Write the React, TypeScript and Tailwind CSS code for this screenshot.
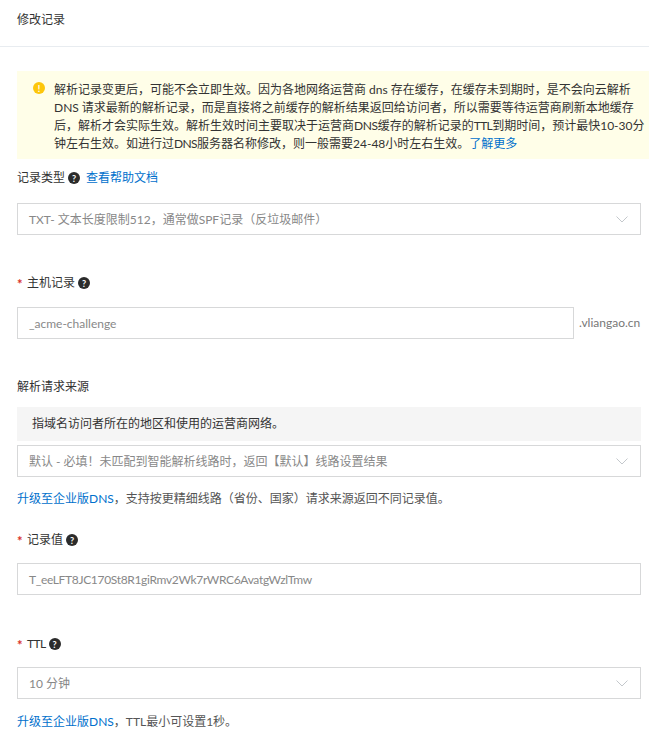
import type { ReactNode } from 'react';

const font = "font-['Lato','Noto_Sans_CJK_SC',sans-serif]";

function Help() {
  return (
    <span className="ml-[3px] inline-flex h-3 w-3 shrink-0 items-center justify-center rounded-full bg-[#2b2b2b] text-[9px] leading-none font-bold text-white">
      ?
    </span>
  );
}

function Chevron() {
  return (
    <svg width="12" height="7" viewBox="0 0 12 7" fill="none" className="shrink-0">
      <path d="M0.5 0.5L6 6L11.5 0.5" stroke="#c4c8cc" strokeWidth="1" />
    </svg>
  );
}

function Field({ children, chevron }: { children: ReactNode; chevron?: boolean }) {
  return (
    <div className="flex h-8 flex-1 items-center justify-between border border-[#d7d8d9] bg-white pr-[12px] pl-[11px] text-[12px] text-[#888888]">
      <span className="pt-[2px]">{children}</span>
      {chevron && <Chevron />}
    </div>
  );
}

function Label({ children, required }: { children: ReactNode; required?: boolean }) {
  return (
    <div className="flex h-[18px] items-center text-[12px] text-[#333333]">
      {required && <span className="mr-[5px] w-[5px] pt-[2px] text-[13px] leading-none font-bold text-[#d93026]">*</span>}
      <span>{children}</span>
      {required && <Help />}
    </div>
  );
}

export default function App() {
  return (
    <div className={`${font} h-[753px] w-[649px] overflow-hidden bg-white`}>
      <div className="flex h-[47px] items-start border-b border-[#e8ecf0] pt-[11px] pl-[17px] text-[12px] leading-[18px] text-[#333333]">
        修改记录
      </div>

      <div className="pl-[17px]">
        <div className="mt-[24px] flex h-[88px] items-start bg-[#fffee8] pt-[10px] pl-[16px]">
          <span className="mt-px mr-[9px] flex h-3 w-3 shrink-0 items-center justify-center rounded-full bg-[#fdc60b] text-[9px] leading-none font-bold text-white">
            !
          </span>
          <p className="whitespace-nowrap text-[12px] leading-[18px] text-[#333333]">
            解析记录变更后，可能不会立即生效。因为各地网络运营商 dns 存在缓存，在缓存未到期时，是不会向云解析
            <br />
            DNS 请求最新的解析记录，而是直接将之前缓存的解析结果返回给访问者，所以需要等待运营商刷新本地缓存
            <br />
            后，解析才会实际生效。解析生效时间主要取决于运营商<span className="tracking-[-0.4px]">DNS</span>缓存的解析记录的<span className="tracking-[-0.6px]">TTL</span>到期时间，预计最快10-30分
            <br />
            钟左右生效。如进行过<span className="tracking-[-0.6px]">DNS</span>服务器名称修改，则一般需要24-48小时左右生效。
            <a className="text-[#0070cc]">了解更多</a>
          </p>
        </div>

        <div className="mt-[10px] flex h-[18px] items-center text-[12px] text-[#333333]">
          <span>记录类型</span>
          <Help />
          <a className="ml-[6px] text-[#0070cc]">查看帮助文档</a>
        </div>

        <div className="mt-[16px] flex w-[624px]">
          <Field chevron>TXT- 文本长度限制512，通常做SPF记录（反垃圾邮件）</Field>
        </div>

        <div className="mt-[39px]">
          <Label required>主机记录</Label>
        </div>
        <div className="mt-[15px] flex w-[624px] items-center">
          <Field>_acme-challenge</Field>
          <span className="ml-[5px] w-[62px] shrink-0 text-[12px] text-[#777777]">.vliangao.cn</span>
        </div>

        <div className="mt-[39px]">
          <Label>解析请求来源</Label>
        </div>
        <div className="mt-[11px] flex h-[34px] w-[624px] items-center bg-[#f5f5f5] pl-[15px] text-[12px] text-[#333333]">
          指域名访问者所在的地区和使用的运营商网络。
        </div>
        <div className="mt-1 flex w-[624px]">
          <Field chevron>默认 - 必填！未匹配到智能解析线路时，返回【默认】线路设置结果</Field>
        </div>
        <div className="mt-[13px] h-[18px] text-[12px] leading-[18px] text-[#555555]">
          <a className="text-[#0070cc]">升级至企业版DNS</a>，支持按更精细线路（省份、国家）请求来源返回不同记录值。
        </div>

        <div className="mt-[23px]">
          <Label required>记录值</Label>
        </div>
        <div className="mt-[14px] flex w-[624px]">
          <Field><span className="tracking-[-0.33px]">T_eeLFT8JC170St8R1giRmv2Wk7rWRC6AvatgWzlTmw</span></Field>
        </div>

        <div className="mt-[40px]">
          <Label required><span className="tracking-[-0.6px]">TTL</span></Label>
        </div>
        <div className="mt-[14px] flex w-[624px]">
          <Field chevron>10 分钟</Field>
        </div>
        <div className="mt-[14px] h-[18px] text-[12px] leading-[18px] text-[#555555]">
          <a className="text-[#0070cc]">升级至企业版DNS</a>，TTL最小可设置1秒。
        </div>
      </div>
    </div>
  );
}
